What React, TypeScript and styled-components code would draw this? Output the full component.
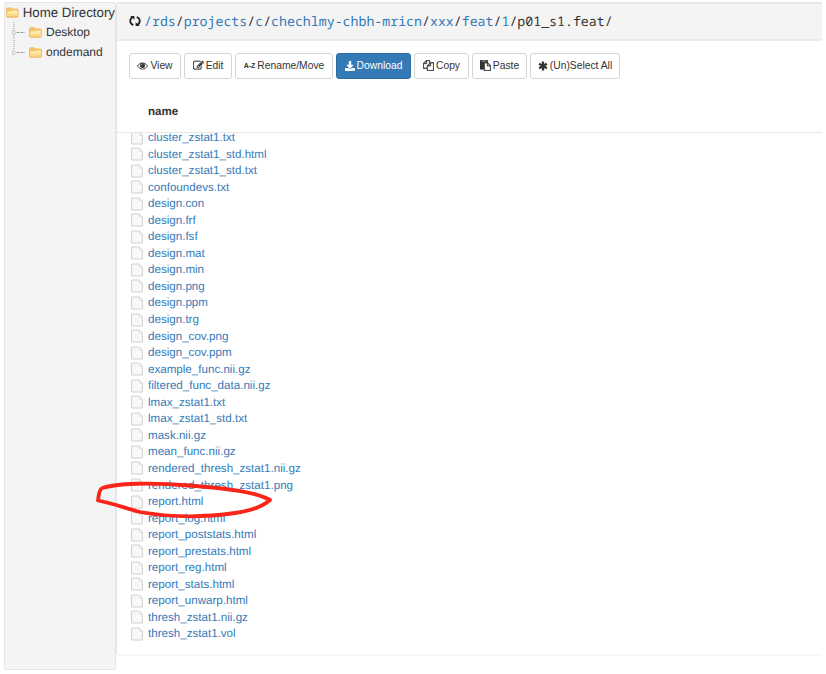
import React from "react";
import styled, { createGlobalStyle, css } from "styled-components";
import { FaDownload } from "react-icons/fa";

const Global = createGlobalStyle`
  * { box-sizing: border-box; }
  body { margin: 0; background: #fff; color: #333; font-family: "Liberation Sans", Arial, sans-serif; overflow: hidden; text-rendering: geometricPrecision; }
`;

const Page = styled.div`
  position: relative;
  display: flex;
  width: 826px;
  height: 674px;
  padding: 2px 4px 0;
`;

const Sidebar = styled.aside`
  width: 112px;
  height: 668px;
  flex: none;
  background: #f4f4f4;
  border: 1px solid #e6e6e6;
  border-radius: 2px;
  white-space: nowrap;
`;

const RootRow = styled.div`
  display: flex;
  align-items: center;
  height: 19px;
  padding-left: 1px;
  font-size: 13.3px;
  color: #333;
`;

const Label = styled.span`
  flex: none;
  margin-left: 4px;
`;

const ChildRow = styled.div`
  display: flex;
  align-items: center;
  height: 20px;
  padding-left: 7px;
  font-size: 12px;
`;

const Panel = styled.main`
  display: flex;
  flex-direction: column;
  width: 706px;
  height: 654px;
  border: 1px solid #e6e6e6;
  border-top-width: 2px;
  border-right: 0;
  border-bottom: 2px solid #f7f7f7;
  border-radius: 3px 0 0 3px;
  background: #fff;
  overflow: hidden;
`;

const PathBar = styled.header`
  display: flex;
  align-items: center;
  height: 37px;
  padding: 0 0 1px 12px;
  background: #f4f4f4;
  border-bottom: 2px solid #ebebeb;
`;

const Path = styled.div`
  margin-left: 3px;
  font: 13.24px "Noto Sans Mono", "DejaVu Sans Mono", monospace;
  white-space: pre;
  color: #333;
`;

const Crumb = styled.a`
  color: #337ab7;
`;

const Toolbar = styled.div`
  display: flex;
  gap: 3px;
  padding: 12px 0 0 12px;
  height: 50px;
`;

const Button = styled.button<{ $w: number; $primary?: boolean }>`
  display: flex;
  align-items: center;
  justify-content: center;
  gap: 2px;
  width: ${(p) => p.$w}px;
  height: 26px;
  padding: 0 0 1px;
  border: 1px solid #d4d4d4;
  border-radius: 3px;
  background: #fff;
  color: #333;
  font: 10.3px "Liberation Sans", Arial, sans-serif;
  white-space: nowrap;
  ${(p) =>
    p.$primary &&
    css`
      background: #337ab7;
      border-color: #2e6da4;
      color: #fff;
    `}
`;

const AZ = styled.b`
  font-size: 7px;
`;

const ColumnHead = styled.div`
  height: 42px;
  flex: none;
  padding: 13px 0 0 31px;
  font-size: 11.6px;
  line-height: 15px;
  font-weight: bold;
  border-bottom: 1px solid #e6e6e6;
`;

const List = styled.ul`
  display: flex;
  flex-direction: column;
  justify-content: flex-end;
  flex: 1;
  min-height: 0;
  margin: 0;
  padding: 0 0 11.800px 14px;
  list-style: none;
  overflow: hidden;
`;

const FileRow = styled.li`
  display: flex;
  align-items: center;
  flex: none;
  gap: 5px;
  height: 16.56px;
  font-size: 11.6px;
  color: #337ab7;
`;

const Mark = styled.svg`
  position: absolute;
  left: 90px;
  top: 475px;
`;

const FolderIcon = () => (
  <svg width="13" height="11" viewBox="0 0 13 11">
    <path d="M.6 9.600V1.500L1.300.8h4l1 1.200h5.400l.7.8v6.800l-.7.7H1.300z" fill="#f7c268" stroke="#efb04f" strokeWidth=".8" />
    <path d="M1.500 4.200h4.700l1-1h4.600v6H1.500z" fill="#fdeaa6" />
    <path d="M1.500 7h10.300v2.200H1.500z" fill="#fbd888" />
  </svg>
);

const Branch = ({ last }: { last?: boolean }) => (
  <svg width="17" height="20" viewBox="0 0 17 20">
    <path d={last ? "M2 0V8" : "M2 0V20"} stroke="#999" strokeDasharray="1 1" />
    <path d="M4.500 10.500h8.500" stroke="#999" strokeDasharray="3 1" />
    <path d="M.8 8L4.200 10.500L.8 13z" fill="#f8f8f8" stroke="#bbb" strokeWidth=".8" />
  </svg>
);

const FileIcon = () => (
  <svg width="12" height="14" viewBox="0 0 12 14">
    <path d="M.6 1h7.600l3.200 3v9H.6z" fill="#f8f8f8" stroke="#d0d0d0" strokeLinejoin="round" />
    <path d="M5.500 3.500l4.500 4V5H7.600V2.500z" fill="#fff" />
    <path d="M8 1.500v2.800h3" stroke="#ddd" strokeWidth=".8" fill="none" />
  </svg>
);

const RefreshIcon = () => (
  <svg width="12" height="12" viewBox="0 0 12 12" fill="none" stroke="#222" strokeWidth="1.800">
    <path d="M4.300 10C.3 8.600.4 3.800 3.600 2.200M7.700 2c4 1.400 3.900 6.200.7 7.800" />
    <path d="M1.300.9h4.100v3.900zM10.700 11.100H6.600V7.200z" fill="#222" stroke="none" />
  </svg>
);

const EyeIcon = () => (
  <svg width="11" height="10" viewBox="0 0 11 10">
    <path d="M.5 5C2.800.9 8.200.9 10.500 5C8.200 9.100 2.800 9.100.5 5z" fill="#fff" stroke="#333" strokeWidth=".9" />
    <circle cx="5.500" cy="4.600" r="2.500" fill="#333" />
    <path d="M4.300 4.400q.1-1 1.100-1.200" stroke="#fff" strokeWidth=".6" fill="none" />
  </svg>
);

const StarIcon = () => (
  <svg width="10" height="10" viewBox="0 0 10 10" stroke="#333" strokeWidth="2.300">
    <path d="M5 .5v9M1.100 2.750l7.800 4.500M1.100 7.250l7.800-4.500" />
  </svg>
);

const Glyph = ({ d }: { d: string }) => (
  <svg width="11" height="11" viewBox="0 0 1792 1792" fill="currentColor" stroke="currentColor" strokeWidth="40">
    <path d={d} />
  </svg>
);

const EDIT =
  "M888 1184l116-116-152-152-116 116v56h96v96h56zm440-720q-16-16-33 1l-350 350q-17 17-1 33t33-1l350-350q17-17 1-33zm80 594v190q0 119-84.5 203.5t-203.5 84.5h-832q-119 0-203.5-84.5t-84.5-203.5v-832q0-119 84.5-203.5t203.5-84.5h832q63 0 117 25 15 7 18 23 3 17-9 29l-49 49q-14 14-32 8-23-6-45-6h-832q-66 0-113 47t-47 113v832q0 66 47 113t113 47h832q66 0 113-47t47-113v-126q0-13 9-22l64-64q15-15 35-7t20 29zm-96-738l288 288-672 672h-288v-288zm444 132l-92 92-288-288 92-92q28-28 68-28t68 28l152 152q28 28 28 68t-28 68z";
const COPY =
  "M1696 384q40 0 68 28t28 68v1216q0 40-28 68t-68 28h-960q-40 0-68-28t-28-68v-288h-544q-40 0-68-28t-28-68v-672q0-40 20-88t48-76l408-408q28-28 76-48t88-20h416q40 0 68 28t28 68v328q68-40 128-40h416zm-544 213l-299 299h299v-299zm-640-384l-299 299h299v-299zm196 647l316-316v-416h-384v416q0 40-28 68t-68 28h-416v640h512v-256q0-40 20-88t48-76zm956 804v-1152h-384v416q0 40-28 68t-68 28h-416v640h896z";
const PASTE =
  "M768 1664h896v-640h-416q-40 0-68-28t-28-68v-416h-384v1152zm256-1440v-64q0-13-9.5-22.5t-22.5-9.5h-704q-13 0-22.5 9.5t-9.5 22.5v64q0 13 9.500 22.500t22.500 9.500h704q13 0 22.500-9.500t9.500-22.500zm256 672h299l-299-299v299zm512 128v672q0 40-28 68t-68 28h-960q-40 0-68-28t-28-68v-160h-544q-40 0-68-28t-28-68v-1344q0-40 28-68t68-28h1088q40 0 68 28t28 68v328q21 13 36 28l408 408q28 28 48 76t20 88z";

const crumbs = ["/rds", "projects", "c", "chechlmy-chbh-mricn", "xxx", "feat", "1"];

const files = [
  "cluster_zstat1.txt", "cluster_zstat1_std.html", "cluster_zstat1_std.txt", "confoundevs.txt",
  "design.con", "design.frf", "design.fsf", "design.mat", "design.min", "design.png", "design.ppm",
  "design.trg", "design_cov.png", "design_cov.ppm", "example_func.nii.gz", "filtered_func_data.nii.gz",
  "lmax_zstat1.txt", "lmax_zstat1_std.txt", "mask.nii.gz", "mean_func.nii.gz",
  "rendered_thresh_zstat1.nii.gz", "rendered_thresh_zstat1.png", "report.html", "report_log.html",
  "report_poststats.html", "report_prestats.html", "report_reg.html", "report_stats.html",
  "report_unwarp.html", "thresh_zstat1.nii.gz", "thresh_zstat1.vol",
];

export default function App() {
  return (
    <Page>
      <Global />
      <Sidebar>
        <RootRow><FolderIcon /><Label>Home Directory</Label></RootRow>
        <ChildRow><Branch /><FolderIcon /><Label>Desktop</Label></ChildRow>
        <ChildRow><Branch last /><FolderIcon /><Label>ondemand</Label></ChildRow>
      </Sidebar>
      <Panel>
        <PathBar>
          <RefreshIcon />
          <Path>
            {crumbs.map((c) => (
              <React.Fragment key={c}><Crumb>{c}</Crumb>/</React.Fragment>
            ))}p01_s1.feat/
          </Path>
        </PathBar>
        <Toolbar>
          <Button $w={52}><EyeIcon />View</Button>
          <Button $w={48}><Glyph d={EDIT} />Edit</Button>
          <Button $w={98}><AZ>A-Z</AZ>Rename/Move</Button>
          <Button $w={75} $primary><FaDownload size={10} />Download</Button>
          <Button $w={55}><Glyph d={COPY} />Copy</Button>
          <Button $w={55}><Glyph d={PASTE} />Paste</Button>
          <Button $w={90}><StarIcon />(Un)Select All</Button>
        </Toolbar>
        <ColumnHead>name</ColumnHead>
        <List>
          {files.map((f) => (
            <FileRow key={f}><FileIcon />{f}</FileRow>
          ))}
        </List>
      </Panel>
      <Mark width="190" height="48" viewBox="0 0 190 48" fill="none">
        <path d="M12 13C26 8.500 60 7 99 10.500C138 13.500 166 17 180 25C172 32 160 36 145 38C110 43 78 42 50 37C34 33 26 29 8 25.500C8.500 20 9 15 12 13" stroke="#fa2419" strokeWidth="3.800" strokeLinejoin="round" />
      </Mark>
    </Page>
  );
}
